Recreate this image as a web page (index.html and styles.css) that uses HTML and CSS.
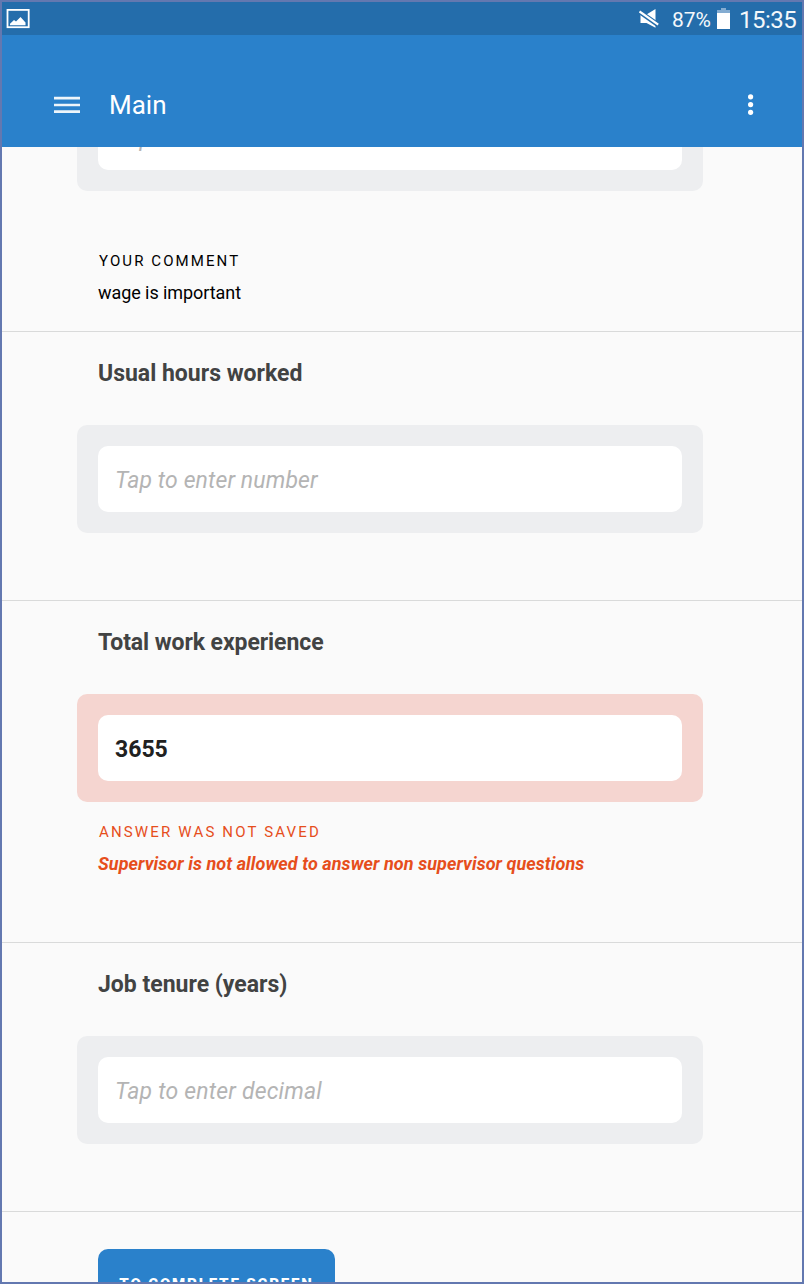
FILE: index.html
```html
<!DOCTYPE html>
<html lang="en">
<head>
<meta charset="utf-8">
<title>Main</title>
<link rel="stylesheet" href="styles.css">
</head>
<body>
<div class="screen">
  <div class="status-bar">
    <svg class="picture-icon" width="24" height="20" viewBox="0 0 24 20"><rect x="1.500" y="0.900" width="21.200" height="17.300" fill="none" stroke="#fff" stroke-width="1.800"/><path d="M4 16.200v-1.500L8 11l2 1.500L14.500 8l5 5.500v2.700z" fill="#fff"/></svg>
    <svg class="mute-icon" width="22" height="21" viewBox="0 0 22 21"><path d="M1.500 5.500h6L16.500 0v18.800L7.500 14h-6z" fill="#fff"/><path d="M0 2.400 20 16.500" stroke="#246dab" stroke-width="4.800"/><path d="M.5 2.500 19.200 15.700" stroke="#fff" stroke-width="2.200"/></svg>
    <span class="battery-level">87%</span>
    <svg class="battery-icon" width="13" height="21" viewBox="0 0 13 21"><path d="M4 0h5v2h4v3H0V2h4z" fill="#84acd1"/><path d="M0 5h13v16H0z" fill="#fff"/></svg>
    <span class="clock">15:35</span>
  </div>
  <header class="app-bar">
    <svg class="menu-icon" width="26" height="18" viewBox="0 0 26 18"><path d="M0 2.200h26M0 9h26M0 15.700h26" stroke="#fff" stroke-width="2.700" opacity=".92"/></svg>
    <h1 class="app-title">Main</h1>
    <svg class="more-icon" width="6" height="22" viewBox="0 0 6 22"><circle cx="2.600" cy="2.800" r="2.600" fill="#fff"/><circle cx="2.600" cy="10.600" r="2.600" fill="#fff"/><circle cx="2.600" cy="18.300" r="2.600" fill="#fff"/></svg>
  </header>
  <main class="content">
    <section class="question scrolled">
      <div class="panel"><div class="field placeholder number">Tap to enter number</div></div>
      <div class="note comment">
        <div class="note-label">YOUR COMMENT</div>
        <div class="note-text">wage is important</div>
      </div>
    </section>
    <section class="question">
      <h2 class="question-title">Usual hours worked</h2>
      <div class="panel"><div class="field placeholder number">Tap to enter number</div></div>
    </section>
    <section class="question with-error">
      <h2 class="question-title experience">Total work experience</h2>
      <div class="panel invalid"><div class="field answer">3655</div></div>
      <div class="note error">
        <div class="note-label">ANSWER WAS NOT SAVED</div>
        <div class="note-text">Supervisor is not allowed to answer non supervisor questions</div>
      </div>
    </section>
    <section class="question">
      <h2 class="question-title">Job tenure (years)</h2>
      <div class="panel"><div class="field placeholder decimal">Tap to enter decimal</div></div>
    </section>
    <button class="complete-button" type="button">TO COMPLETE SCREEN</button>
  </main>
</div>
</body>
</html>
```
FILE: styles.css
```css
* { box-sizing: border-box; }
body { margin: 0; font-family: Roboto, sans-serif; }
h1, h2 { margin: 0; }
svg { display: block; flex: none; }
.screen {
  display: flex;
  flex-direction: column;
  width: 804px;
  height: 1284px;
  border: 2px solid #6378b0;
  background: #fafafa;
  overflow: hidden;
  white-space: nowrap;
}
.status-bar {
  display: flex;
  flex: none;
  align-items: center;
  height: 33px;
  padding: 0 6px 0 4px;
  background: #246dab;
  color: #f4f8fb;
}
.mute-icon { margin: 2px 0 0 auto; }
.battery-level { width: 40px; margin-left: 11px; padding-top: 3px; font-size: 21px; line-height: 24px; letter-spacing: -.1px; }
.battery-icon { margin-left: 5px; }
.clock { width: 57px; margin-left: 9px; padding-top: 3px; font-size: 24px; line-height: 28px; letter-spacing: -.5px; }
.app-bar {
  display: flex;
  flex: none;
  align-items: center;
  height: 112px;
  padding: 28px 48px 0 52px;
  background: #2a81cb;
  color: #fff;
}
.app-title { margin-left: 29px; font-size: 26px; line-height: 32px; font-weight: 400; }
.more-icon { margin-left: auto; }
.content { flex: 1; min-height: 0; overflow: hidden; }
.question {
  height: 269px;
  padding: 0 99px 0 75px;
  border-bottom: 1px solid #d9dada;
}
.question.scrolled { height: 249px; margin-top: -64px; }
.question.with-error { height: 342px; }
.question-title {
  height: 93px;
  padding: 27px 21px 0;
  font-size: 23px;
  line-height: 30px;
  font-weight: 700;
  color: #424343;
}
.question-title.experience { letter-spacing: -.08px; }
.panel { height: 108px; padding: 21px; border-radius: 10px; background: #edeef0; }
.panel.invalid { background: #f5d5d0; }
.field {
  display: flex;
  align-items: center;
  height: 66px;
  padding: 2px 17px 0;
  border-radius: 10px;
  background: #fff;
  font-size: 23px;
}
.placeholder { color: #b4b4b4; font-style: italic; }
.placeholder.number { letter-spacing: .12px; }
.placeholder.decimal { letter-spacing: .2px; }
.answer { color: #212121; font-weight: 700; }
.note { padding: 20px 21px 0; }
.note.comment { padding-top: 60px; color: #000; }
.note.error { color: #e64e1c; }
.note-label { padding-left: 1px; font-size: 15px; line-height: 20px; letter-spacing: 2.100px; }
.error .note-label { letter-spacing: 2.160px; }
.note-text { margin-top: 11px; font-size: 18px; line-height: 22px; letter-spacing: -.07px; }
.error .note-text { font-weight: 700; font-style: italic; letter-spacing: .07px; }
.complete-button {
  display: block;
  width: 237px;
  height: 68px;
  margin: 37px 0 0 96px;
  padding: 2px 0 0;
  border: 0;
  border-radius: 10px;
  background: #2a81cb;
  color: #fff;
  font: 900 15px Roboto, sans-serif;
  letter-spacing: 1.850px;
}
```
